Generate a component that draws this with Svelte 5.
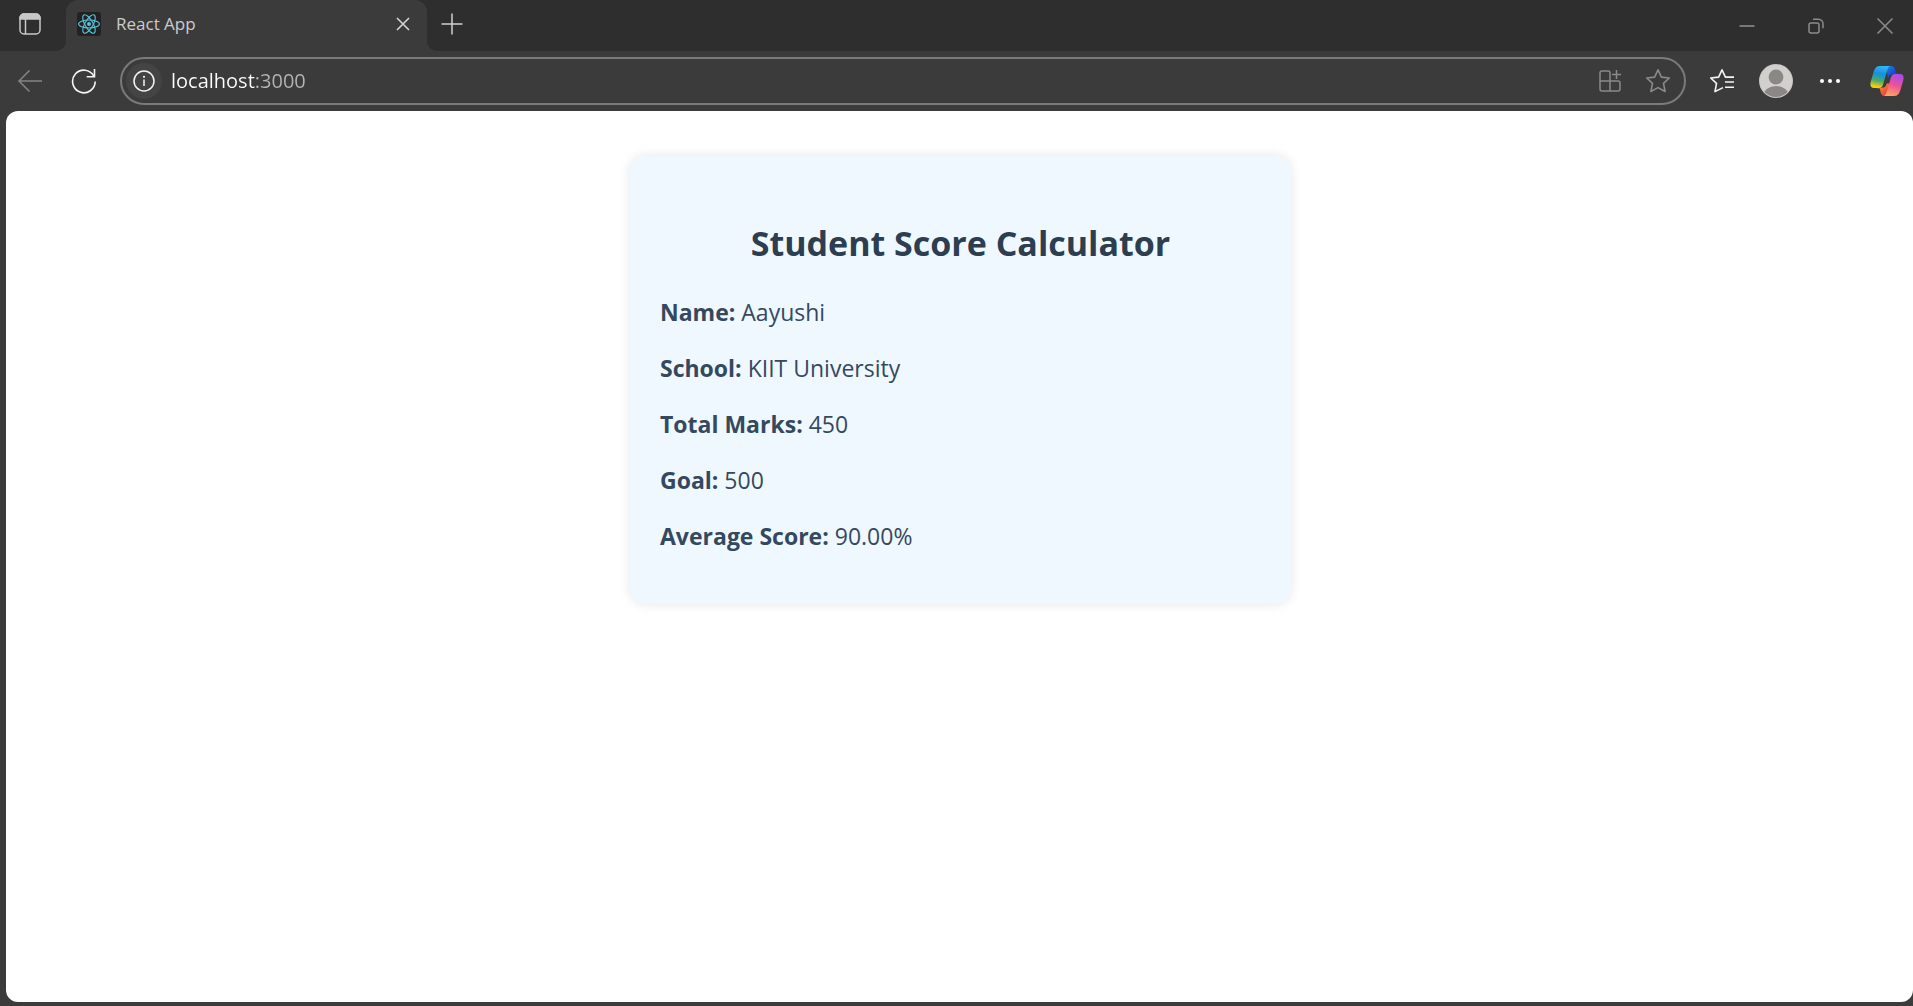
<script>
  const student = { name: 'Aayushi', school: 'KIIT University', total: 450, goal: 500 };
  const average = ((student.total / student.goal) * 100).toFixed(2) + '%';
  const rows = [
    ['Name:', student.name],
    ['School:', student.school],
    ['Total Marks:', student.total],
    ['Goal:', student.goal],
    ['Average Score:', average]
  ];
  let url = $state('localhost:3000');
</script>

<div class="browser">
  <header class="tabbar">
    <button class="workspace" aria-label="Tab actions">
      <svg width="24" height="24" viewBox="0 0 24 24" fill="none" stroke="#c8c8c8" stroke-width="1.5">
        <rect x="2" y="2" width="20" height="20" rx="4" />
        <path d="M2 7V6a4 4 0 0 1 4-4h12a4 4 0 0 1 4 4v1z" fill="#c8c8c8" />
        <path d="M7.500 7v15" />
      </svg>
    </button>
    <div class="tab">
      <svg class="favicon" width="24" height="24" viewBox="0 0 24 24" fill="none" stroke="#58c4dc" stroke-width="1.1">
        <rect width="24" height="24" rx="3" fill="#222222" stroke="none" />
        <ellipse cx="12" cy="12" rx="10.400" ry="4" />
        <ellipse cx="12" cy="12" rx="10.400" ry="4" transform="rotate(60 12 12)" />
        <ellipse cx="12" cy="12" rx="10.400" ry="4" transform="rotate(120 12 12)" />
        <circle cx="12" cy="12" r="2" fill="#58c4dc" stroke="none" />
      </svg>
      <span class="tab-title">React App</span>
      <button class="tab-close" aria-label="Close tab">
        <svg width="14" height="14" viewBox="0 0 14 14" stroke="#d4d4d4" stroke-width="1.6"><path d="M1 1l12 12M13 1L1 13" /></svg>
      </button>
    </div>
    <button class="new-tab" aria-label="New tab">
      <svg width="22" height="22" viewBox="0 0 22 22" stroke="#cfcfcf" stroke-width="1.5"><path d="M11 0.500v21M0.500 11h21" /></svg>
    </button>
    <div class="window-controls">
      <button aria-label="Minimize">
        <svg width="16" height="16" viewBox="0 0 16 16" stroke="#8c8c8c" stroke-width="1.600"><path d="M0.500 8h15" /></svg>
      </button>
      <button aria-label="Restore">
        <svg width="16" height="16" viewBox="0 0 16 16" fill="none" stroke="#8c8c8c" stroke-width="1.500">
          <rect x="1" y="5" width="10" height="10" rx="2" />
          <path d="M5 1.200h5.500a4.500 4.500 0 0 1 4.500 4.500v4.500" />
        </svg>
      </button>
      <button aria-label="Close window">
        <svg width="16" height="16" viewBox="0 0 16 16" stroke="#8c8c8c" stroke-width="1.500"><path d="M0.500 0.500l15 15M15.500 0.500l-15 15" /></svg>
      </button>
    </div>
  </header>

  <nav class="toolbar" aria-label="Browser toolbar">
    <button aria-label="Back">
      <svg width="26" height="24" viewBox="0 0 26 24" fill="none" stroke="#858585" stroke-width="1.500"><path d="M25 12H2M12.500 1.500L2 12l10.500 10.500" /></svg>
    </button>
    <button aria-label="Refresh">
      <svg width="26" height="26" viewBox="0 0 26 26" fill="none" stroke="#f5f5f5" stroke-width="1.600">
        <path d="M24.200 13.500A11.300 11.300 0 1 1 22.800 8" />
        <path d="M23.500 1v7.700h-7.800" />
      </svg>
    </button>
    <form class="address" onsubmit={(e) => e.preventDefault()}>
      <button class="site-info" type="button" aria-label="Site information">
        <svg width="22" height="22" viewBox="0 0 22 22" fill="none" stroke="#f5f5f5" stroke-width="1.500">
          <circle cx="11" cy="11" r="10" />
          <path d="M11 9.500v6.500" />
          <circle cx="11" cy="6.800" r="1.100" fill="#f5f5f5" stroke="none" />
        </svg>
      </button>
      <input class="url" type="text" aria-label="Address" spellcheck="false" bind:value={url} />
      <button type="button" aria-label="Install app">
        <svg width="24" height="24" viewBox="0 0 24 24" fill="none" stroke="#8a8a8a" stroke-width="1.500">
          <path d="M12 12V4a2 2 0 0 0-2-2H4a2 2 0 0 0-2 2v16a2 2 0 0 0 2 2h16a2 2 0 0 0 2-2v-6a2 2 0 0 0-2-2H2M12 12v10M18.500 1v9M14 5.500h9" />
        </svg>
      </button>
      <button type="button" aria-label="Add to favorites">
        <svg width="26" height="26" viewBox="0 0 26 26" fill="none" stroke="#8a8a8a" stroke-width="1.600" stroke-linejoin="round">
          <path d="M13 1.800l3.400 7.300 7.900.9-5.800 5.400 1.600 8.100L13 19.600l-7.100 3.900 1.600-8.100L1.700 10l7.900-.9z" />
        </svg>
      </button>
    </form>
    <button aria-label="Favorites">
      <svg width="26" height="26" viewBox="0 0 26 26" fill="none" stroke="#f5f5f5" stroke-width="1.600" stroke-linejoin="round">
        <path d="M14 19.600L6 23.600l1.500-8.200L1.700 10l7.900-.9L13 1.800l3.400 7.300H25M16 14h9M16 19.200h9" />
      </svg>
    </button>
    <button aria-label="Profile">
      <svg width="34" height="34" viewBox="0 0 34 34">
        <defs><clipPath id="avatar"><circle cx="17" cy="17" r="16" /></clipPath></defs>
        <circle cx="17" cy="17" r="17" fill="#c9c7c4" />
        <circle cx="17" cy="17" r="16" fill="#d2d0cd" />
        <g clip-path="url(#avatar)" fill="#8a8785">
          <circle cx="17" cy="13" r="7.400" />
          <ellipse cx="17" cy="31.500" rx="12.500" ry="9.500" />
        </g>
      </svg>
    </button>
    <button aria-label="Settings and more">
      <svg width="22" height="6" viewBox="0 0 22 6" fill="#ffffff"><circle cx="3" cy="3" r="2" /><circle cx="11" cy="3" r="2" /><circle cx="19" cy="3" r="2" /></svg>
    </button>
    <button class="copilot" aria-label="Copilot">
      <svg width="34" height="32" viewBox="0 0 34 32">
        <defs>
          <linearGradient id="cool" x1="0.500" y1="0" x2="0.300" y2="1">
            <stop offset="0" stop-color="#2fb5f5" /><stop offset="0.350" stop-color="#168fe0" />
            <stop offset="0.650" stop-color="#47a86d" /><stop offset="0.950" stop-color="#f4cf0a" />
          </linearGradient>
          <linearGradient id="warm" x1="0.700" y1="0" x2="0.400" y2="1">
            <stop offset="0" stop-color="#a44bf0" /><stop offset="0.500" stop-color="#ef5097" /><stop offset="1" stop-color="#ffa45b" />
          </linearGradient>
          <linearGradient id="blue" x1="0" y1="0" x2="1" y2="1">
            <stop offset="0" stop-color="#1788e8" /><stop offset="0.600" stop-color="#1c43d0" /><stop offset="1" stop-color="#2d72e8" />
          </linearGradient>
          <linearGradient id="red" x1="0" y1="0" x2="1" y2="1">
            <stop offset="0" stop-color="#ffad45" /><stop offset="0.600" stop-color="#f05a36" /><stop offset="1" stop-color="#dd3c5b" />
          </linearGradient>
        </defs>
        <path d="M16 1h5c2.500 0 3.500 1.500 4.200 4l.9 3.500H30l-8 1c-2.500 0-3.300 1.500-4 4z" fill="url(#blue)" />
        <path d="M18 31h-3c-3 0-3.700-1.500-4.400-4l-.8-3.500H6l7-1c2 0 3-1.500 3.700-4h3z" fill="url(#red)" />
        <path d="M21 1H9.500C6 1 4.500 4 3.300 8L.8 16.500C-.3 20.500.8 23 4 23h5c2.500 0 3.600-1.500 4.400-4.500L17 6c.8-3 1.800-5 4-5z" fill="url(#cool)" />
        <path d="M13 31h11.500c3.500 0 5-3 6.200-7l2.500-8.500C34.300 11.500 33.200 9 30 9h-5c-2.500 0-3.600 1.500-4.400 4.500L17 26c-.8 3-1.800 5-4 5z" fill="url(#warm)" />
      </svg>
    </button>
  </nav>

  <main class="page">
    <section class="card">
      <h1>Student Score Calculator</h1>
      {#each rows as [label, value]}
        <p><strong>{label}</strong> {value}</p>
      {/each}
    </section>
  </main>
</div>

<style>
  :global(body) {
    margin: 0;
    background: #3b3b3b;
  }
  .browser {
    min-height: 100vh;
    box-sizing: border-box;
    padding-bottom: 4px;
    display: flex;
    flex-direction: column;
    background: #3b3b3b;
    font-family: 'Open Sans', 'Noto Sans', sans-serif;
  }
  button {
    display: flex;
    align-items: center;
    justify-content: center;
    flex: none;
    margin: 0;
    padding: 0;
    border: 0;
    background: none;
  }
  svg {
    display: block;
    flex: none;
  }
  .tabbar {
    display: flex;
    height: 51px;
    background: #3b3b3b;
  }
  .workspace {
    width: 66px;
    padding: 0 6px 3px 0;
    background: #2e2e2e;
    border-radius: 0 0 10px 0;
  }
  .tab {
    width: 361px;
    box-sizing: border-box;
    display: flex;
    align-items: center;
    padding: 0 10px 3px 11px;
    border-radius: 12px 12px 0 0;
    background: #3b3b3b;
    box-shadow: 0 -12px 0 12px #2e2e2e;
    clip-path: inset(0);
  }
  .tab-title {
    flex: 1;
    margin-left: 15px;
    font-size: 17px;
    line-height: 24px;
    color: #cccccc;
  }
  .tab-close {
    width: 28px;
    height: 28px;
  }
  .new-tab {
    width: 50px;
    padding-bottom: 4px;
    background: #2e2e2e;
    border-radius: 0 0 0 10px;
  }
  .window-controls {
    flex: 1;
    display: flex;
    justify-content: flex-end;
    gap: 14px;
    padding-right: 1px;
    background: #2e2e2e;
  }
  .window-controls button {
    width: 55px;
  }
  .toolbar {
    display: flex;
    align-items: center;
    gap: 6px;
    height: 60px;
    padding-left: 6px;
  }
  .toolbar > button {
    width: 48px;
    height: 48px;
  }
  .toolbar > .copilot {
    width: 53px;
  }
  .address {
    flex: 1;
    min-width: 0;
    height: 48px;
    box-sizing: border-box;
    display: flex;
    align-items: center;
    gap: 12px;
    margin: 0 6px;
    padding: 0 8px 0 4px;
    border: 2px solid #7a7a7a;
    border-radius: 24px;
  }
  .address button {
    width: 36px;
    height: 36px;
  }
  .address .site-info {
    border-radius: 50%;
    background: #444444;
  }
  .url {
    flex: 1;
    min-width: 0;
    margin: 0 0 0 -3px;
    padding: 0;
    border: 0;
    outline: 0;
    font-family: inherit;
    font-size: 20px;
    line-height: 32px;
    color: #ffffff;
    background: linear-gradient(90deg, #ffffff 84px, #b4b4b4 84px);
    background-clip: text;
    -webkit-background-clip: text;
    -webkit-text-fill-color: transparent;
  }
  .page {
    flex: 1;
    margin-left: 6px;
    padding: 45px 24px 45px 26px;
    background: #ffffff;
    border-radius: 12px;
  }
  .card {
    max-width: 661px;
    box-sizing: border-box;
    margin: 0 auto;
    padding: 62px 30px 40px;
    border-radius: 15px;
    background: #f0f8ff;
    box-shadow: 0 0 12px rgba(0, 0, 0, 0.1);
  }
  h1 {
    margin: 0 0 16px;
    text-align: center;
    font-size: 34px;
    line-height: 50px;
    font-weight: 700;
    color: #2c3e50;
  }
  p {
    margin: 0;
    padding: 10px 0;
    font-size: 23px;
    line-height: 36px;
    color: #34495e;
  }
</style>
